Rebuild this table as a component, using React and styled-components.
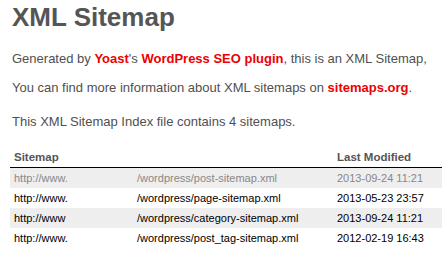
import styled, { createGlobalStyle } from "styled-components";

const GlobalStyle = createGlobalStyle`
  body {
    margin: 0;
    background: #fff;
    font-family: "Liberation Sans", Arial, sans-serif;
  }
`;

const Page = styled.div`
  width: 432px;
  padding: 2px 6px 0 10px;
`;

const Title = styled.h1`
  margin: 0 0 0 2px;
  font-size: 26px;
  line-height: 30px;
  font-weight: bold;
  color: #555;
`;

const Text = styled.p`
  margin: ${(p) => p.$top}px 0 0 2px;
  font-size: 13px;
  line-height: 15px;
  color: #505050;
  white-space: nowrap;
`;

const Link = styled.a`
  color: #e00;
  font-weight: bold;
  text-decoration: none;
`;

const Table = styled.div`
  margin-top: 18px;
  font-size: 11px;
`;

const Row = styled.div`
  display: grid;
  grid-template-columns: 123px 200px 1fr;
  height: 20px;
  line-height: 20px;
  background: ${(p) => (p.$alt ? "#eee" : "#fff")};
  color: ${(p) => (p.$visited ? "#888" : "#000")};
`;

const HeadRow = styled(Row)`
  border-bottom: 1px solid #000;
  font-size: 11.5px;
  font-weight: bold;
  color: #555;
`;

const Cell = styled.div`
  padding-left: 4px;
  white-space: nowrap;
  overflow: hidden;
`;

const rows = [
  ["http://www.", "/wordpress/post-sitemap.xml", "2013-09-24 11:21"],
  ["http://www.", "/wordpress/page-sitemap.xml", "2013-05-23 23:57"],
  ["http://www", "/wordpress/category-sitemap.xml", "2013-09-24 11:21"],
  ["http://www.", "/wordpress/post_tag-sitemap.xml", "2012-02-19 16:43"],
];

function App() {
  return (
    <Page>
      <GlobalStyle />
      <Title>XML Sitemap</Title>
      <Text $top={19}>
        Generated by <Link>Yoast</Link>'s <Link>WordPress SEO plugin</Link>, this is an XML Sitemap,
      </Text>
      <Text $top={14}>
        You can find more information about XML sitemaps on <Link>sitemaps.org</Link>.
      </Text>
      <Text $top={19}>This XML Sitemap Index file contains 4 sitemaps.</Text>
      <Table>
        <HeadRow>
          <Cell>Sitemap</Cell>
          <Cell />
          <Cell>Last Modified</Cell>
        </HeadRow>
        {rows.map((r, i) => (
          <Row key={i} $alt={i % 2 === 0} $visited={i === 0}>
            <Cell>{r[0]}</Cell>
            <Cell>{r[1]}</Cell>
            <Cell>{r[2]}</Cell>
          </Row>
        ))}
      </Table>
    </Page>
  );
}

export default App;
